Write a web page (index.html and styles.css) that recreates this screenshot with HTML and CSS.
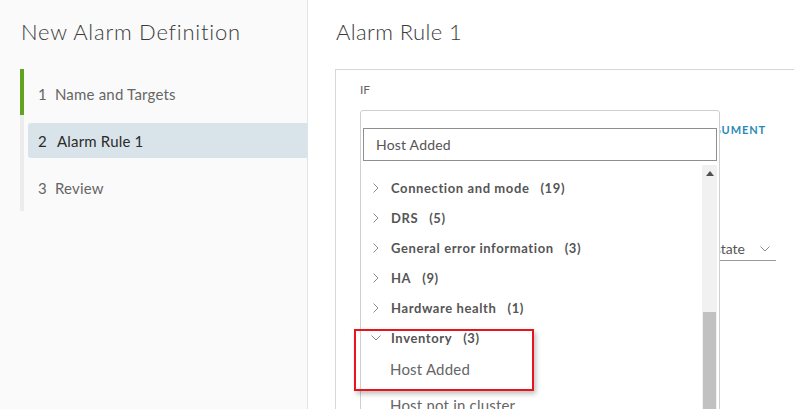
FILE: index.html
```html
<!DOCTYPE html>
<html>
<head>
<meta charset="utf-8">
<link rel="stylesheet" href="styles.css">
</head>
<body>
<div class="app">
  <aside class="sidebar">
    <h1 class="side-title">New Alarm Definition</h1>
    <ol class="steps">
      <li class="step done"><span class="num">1</span>Name and Targets</li>
      <li class="step active"><span class="num">2</span>Alarm Rule 1</li>
      <li class="step"><span class="num">3</span>Review</li>
    </ol>
  </aside>
  <main class="main">
    <h2 class="main-title">Alarm Rule 1</h2>
    <section class="card">
      <div class="label">IF</div>
      <div class="row row-trigger">
        <div class="fake-select wide">Select trigger</div>
        <a class="link">ADD ARGUMENT</a>
      </div>
      <div class="row row-state">
        <div class="underline-select"><span>Connection state</span>
          <svg class="chev-down" width="10" height="6" viewBox="0 0 10 6"><path d="M0.5 0.5 L5 5 L9.5 0.5" fill="none" stroke="#8c8c8c" stroke-width="1"/></svg>
        </div>
      </div>

      <div class="dropdown">
        <div class="search">Host Added</div>
        <div class="list-wrap">
          <ul class="tree">
            <li class="node"><svg class="chev" width="6" height="10" viewBox="0 0 6 10"><path d="M0.5 0.5 L5 5 L0.5 9.5" fill="none" stroke="#8c8c8c" stroke-width="1"/></svg><b>Connection and mode</b><span class="cnt">(19)</span></li>
            <li class="node"><svg class="chev" width="6" height="10" viewBox="0 0 6 10"><path d="M0.5 0.5 L5 5 L0.5 9.5" fill="none" stroke="#8c8c8c" stroke-width="1"/></svg><b>DRS</b><span class="cnt">(5)</span></li>
            <li class="node"><svg class="chev" width="6" height="10" viewBox="0 0 6 10"><path d="M0.5 0.5 L5 5 L0.5 9.5" fill="none" stroke="#8c8c8c" stroke-width="1"/></svg><b>General error information</b><span class="cnt">(3)</span></li>
            <li class="node"><svg class="chev" width="6" height="10" viewBox="0 0 6 10"><path d="M0.5 0.5 L5 5 L0.5 9.5" fill="none" stroke="#8c8c8c" stroke-width="1"/></svg><b>HA</b><span class="cnt">(9)</span></li>
            <li class="node"><svg class="chev" width="6" height="10" viewBox="0 0 6 10"><path d="M0.5 0.5 L5 5 L0.5 9.5" fill="none" stroke="#8c8c8c" stroke-width="1"/></svg><b>Hardware health</b><span class="cnt">(1)</span></li>
            <li class="node open"><svg class="chev chev-open" width="10" height="6" viewBox="0 0 10 6"><path d="M0.5 0.5 L5 5 L9.5 0.5" fill="none" stroke="#8c8c8c" stroke-width="1"/></svg><b>Inventory</b><span class="cnt">(3)</span></li>
            <li class="leaf">Host Added</li>
            <li class="leaf">Host not in cluster</li>
          </ul>
          <div class="scrollbar">
            <svg class="sb-up" width="8" height="5" viewBox="0 0 8 5"><path d="M0 5 L4 0 L8 5 Z" fill="#505050"/></svg>
            <div class="sb-thumb"></div>
          </div>
        </div>
      </div>
    </section>
    <div class="highlight"></div>
  </main>
</div>
</body>
</html>
```

FILE: styles.css
```css
* { box-sizing: border-box; }
html, body { margin: 0; padding: 0; }
body {
  width: 794px;
  height: 409px;
  overflow: hidden;
  font-family: Lato, "Noto Sans", sans-serif;
  color: #333;
  background: #fff;
}
.app {
  display: flex;
  height: 409px;
}
.sidebar {
  width: 308px;
  flex: none;
  background: #fafafa;
  border-right: 1px solid #e3e3e3;
}
.side-title {
  margin: 18px 0 0 21px;
  font-size: 22px;
  line-height: 28px;
  font-weight: 300;
  color: #3a3a3a;
  letter-spacing: 0.75px;
}
.steps {
  list-style: none;
  margin: 23px 0 0 20px;
  padding: 7px 0 6px;
  border-left: 4px solid #ececec;
  display: flex;
  flex-direction: column;
  gap: 12px;
}
.step {
  height: 35px;
  margin-left: 4px;
  display: flex;
  align-items: center;
  padding-left: 10px;
  font-size: 15px;
  letter-spacing: 0.2px;
  color: #666;
  border-radius: 3px 0 0 3px;
  position: relative;
}
.step.done::before {
  content: "";
  position: absolute;
  left: -8px;
  top: -7px;
  width: 4px;
  height: 46px;
  background: #62a420;
}
.step .num { margin-right: 8px; }
.step.active {
  background: #d9e4ea;
  color: #2b2b2b;
}
.step.active .num { margin-right: 10px; }

.main {
  flex: 1;
  position: relative;
  padding-left: 27px;
}
.main-title {
  margin: 18px 0 0 1px;
  font-size: 22px;
  line-height: 28px;
  font-weight: 300;
  color: #3a3a3a;
  letter-spacing: 0.4px;
}
.card {
  position: relative;
  margin-top: 23px;
  margin-right: -20px;
  height: 400px;
  border: 1px solid #d7d7d7;
  padding: 12px 24px 0;
}
.label {
  font-size: 12px;
  color: #666;
  line-height: 16px;
}
.row {
  display: flex;
  align-items: center;
}
.row-trigger {
  margin-top: 19px;
  height: 24px;
}
.fake-select.wide {
  width: 302px;
  font-size: 13px;
  color: #666;
}
.link {
  margin-left: 4px;
  white-space: nowrap;
  font-size: 11px;
  font-weight: 700;
  letter-spacing: 0.9px;
  color: #2d88b8;
}
.row-state {
  margin-top: 96px;
  padding-left: 216px;
}
.underline-select {
  display: flex;
  align-items: center;
  width: 200px;
  height: 24px;
  border-bottom: 1px solid #9a9a9a;
  font-size: 14px;
  color: #555;
  justify-content: flex-end;
  padding-right: 6px;
}
.underline-select span { margin-right: 15px; }

.dropdown {
  position: absolute;
  left: 24px;
  top: 40px;
  width: 360px;
  height: 320px;
  background: #fff;
  border: 1px solid #cfcfcf;
  border-radius: 3px;
  padding: 17px 2px 0;
}
.search {
  height: 33px;
  border: 1px solid #8f8f8f;
  font-size: 14px;
  letter-spacing: 0.2px;
  color: #555;
  padding-left: 12px;
  display: flex;
  align-items: center;
}
.list-wrap {
  display: flex;
  margin-top: 4px;
}
.tree {
  list-style: none;
  margin: 0;
  padding: 8px 0 0;
  flex: 1;
}
.node {
  height: 30px;
  display: flex;
  align-items: center;
  padding-left: 10px;
  font-size: 13px;
  letter-spacing: 0.6px;
  color: #555;
}
.node b { font-weight: 700; margin-left: 12px; }
.node .cnt { font-weight: 700; margin-left: 11px; }
.node.open .chev-open { margin-left: -2px; margin-right: -2px; }
.leaf {
  height: 32px;
  display: flex;
  align-items: center;
  padding-left: 27px;
  font-size: 15px;
  letter-spacing: 0.2px;
  color: #666;
}
.leaf + .leaf { height: 40px; }
.scrollbar {
  width: 15px;
  height: 260px;
  background: #f1f1f1;
  position: relative;
  flex: none;
}
.sb-up {
  position: absolute;
  left: 4px;
  top: 6px;
}
.sb-thumb {
  position: absolute;
  left: 1px;
  right: 1px;
  top: 147px;
  bottom: 0;
  background: #c1c1c1;
}
.highlight {
  position: absolute;
  left: 46px;
  top: 329px;
  width: 180px;
  height: 62px;
  border: 2px solid #e8141b;
  box-shadow: 2px 3px 5px rgba(0,0,0,0.25);
}
```
